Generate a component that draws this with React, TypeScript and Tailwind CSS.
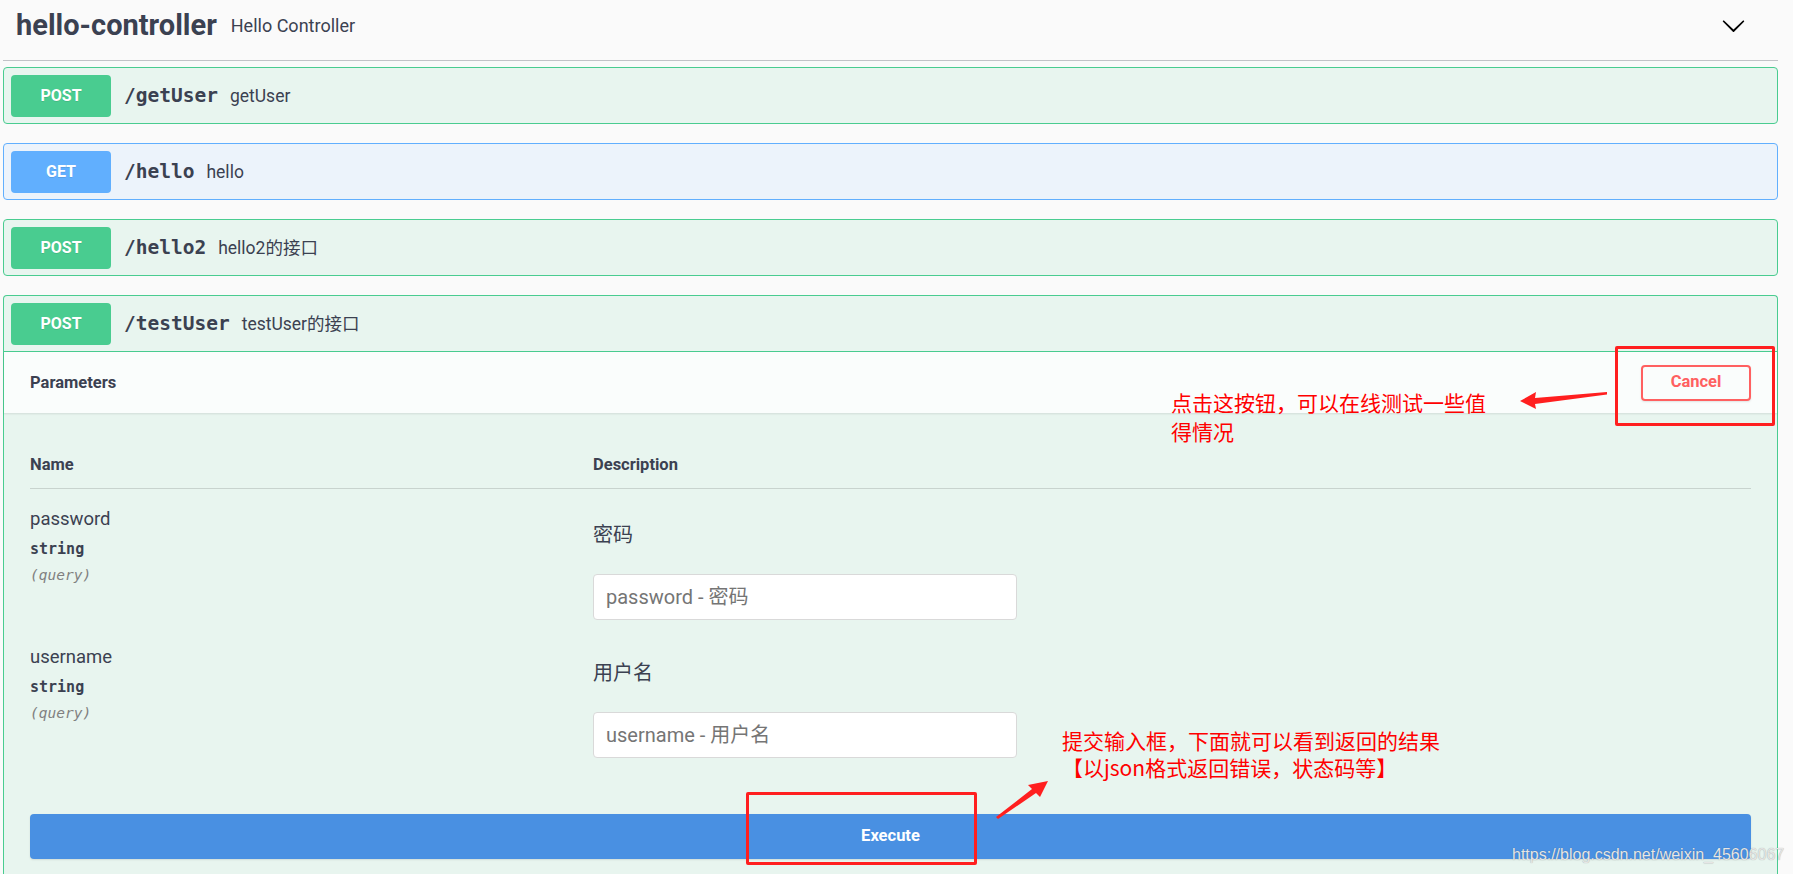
import React from 'react';

const sans = "font-['Roboto','Noto_Sans_CJK_SC',sans-serif]";

const endpoints = [
  { method: 'POST', path: '/getUser', summary: 'getUser' },
  { method: 'GET', path: '/hello', summary: 'hello' },
  { method: 'POST', path: '/hello2', summary: 'hello2的接口' },
];

const params = [
  { name: 'password', desc: '密码' },
  { name: 'username', desc: '用户名' },
];

function Summary({ method, path, summary, open }: { method: string; path: string; summary: string; open?: boolean }) {
  const get = method === 'GET';
  return (
    <div
      className={`flex items-center pl-[7px] pt-[7px] pb-[6px] ${open ? 'border-b border-[#49cc90]' : ''}`}
    >
      <span
        className={`flex h-[42px] w-[100px] items-center justify-center rounded-[4px] text-[16px] font-bold text-white [text-shadow:0_1px_0_rgba(0,0,0,0.1)] ${
          get ? 'bg-[#61affe]' : 'bg-[#49cc90]'
        }`}
      >
        {method}
      </span>
      <span className="pl-[13px] pr-[12px] font-['DejaVu_Sans_Mono',monospace] text-[19.5px] font-bold text-[#3b4151]">
        {path}
      </span>
      <span className="text-[17.5px] text-[#3b4151]">{summary}</span>
    </div>
  );
}

function ParamRow({ name, desc }: { name: string; desc: string }) {
  return (
    <div className="flex pb-[7px]">
      <div className="w-[563px] shrink-0 pt-[18px]">
        <div className="text-[18.5px] leading-[24px] text-[#3b4151]">{name}</div>
        <div className="mt-[8px] font-['DejaVu_Sans_Mono',monospace] text-[15px] font-semibold leading-[20px] text-[#3b4151]">
          string
        </div>
        <div className="mt-[6px] font-['DejaVu_Sans_Mono',monospace] text-[14.5px] italic leading-[20px] text-[#808080]">
          (query)
        </div>
      </div>
      <div className="pt-[33px]">
        <div className="text-[20px] leading-[26px] text-[#3b4151]">{desc}</div>
        <input
          readOnly
          placeholder={`${name} - ${desc}`}
          className="mt-[26px] h-[46px] w-[424px] rounded-[4px] border border-[#d9d9d9] bg-white pl-[12px] text-[20px] text-[#3b4151] outline-none placeholder:text-[#757575]"
        />
      </div>
    </div>
  );
}

export default function App() {
  return (
    <div className={`relative min-h-screen w-full overflow-hidden bg-[#fafafa] pl-[3px] pr-[15px] ${sans}`}>
      {/* tag header */}
      <div className="flex h-[61px] items-center border-b border-[#c1c3c7] pb-[10px] pl-[13px] pr-[32px]">
        <h4 className="text-[29px] font-bold leading-none text-[#3b4151]">hello-controller</h4>
        <small className="ml-[14px] text-[18px] text-[#3b4151]">Hello Controller</small>
        <svg className="ml-auto" width="25" height="25" viewBox="0 0 20 20" aria-hidden="true">
          <path
            fill="#000"
            d="M17.418 6.109c.272-.268.709-.268.979 0s.271.701 0 .969l-7.908 7.83c-.27.268-.707.268-.979 0l-7.908-7.83c-.27-.268-.27-.701 0-.969.271-.268.709-.268.979 0L10 13.25l7.418-7.141z"
          />
        </svg>
      </div>

      <div className="mt-[6px] flex flex-col gap-[19px]">
        {endpoints.map((e) => (
          <div
            key={e.path}
            className={`rounded-[4px] border ${
              e.method === 'GET' ? 'border-[#61affe] bg-[#ecf3fb]' : 'border-[#49cc90] bg-[#e8f5ef]'
            }`}
          >
            <Summary {...e} />
          </div>
        ))}

        {/* expanded operation */}
        <div className="rounded-t-[4px] border border-b-0 border-[#49cc90] bg-[#e8f5ef]">
          <Summary method="POST" path="/testUser" summary="testUser的接口" open />
          <div className="flex h-[61px] items-center justify-between bg-white/80 px-[26px] shadow-[0_1px_2px_rgba(0,0,0,0.1)]">
            <h4 className="pt-[2px] text-[16.5px] font-bold text-[#3b4151]">Parameters</h4>
            <button className="h-[36px] w-[110px] rounded-[4px] border-2 border-[#ff6060] text-[16.5px] font-bold text-[#ff6060] shadow-[0_1px_2px_rgba(0,0,0,0.1)]">
              Cancel
            </button>
          </div>
          <div className="px-[26px] pt-[42px] pb-[20px]">
            <div className="flex border-b border-[#c8d3ce] pb-[13px] text-[16.5px] font-bold leading-[20px] text-[#3b4151]">
              <div className="w-[563px]">Name</div>
              <div>Description</div>
            </div>
            {params.map((p) => (
              <ParamRow key={p.name} {...p} />
            ))}
            <button className="mt-[49px] h-[45px] w-full rounded-[4px] bg-[#4990e2] text-[16.5px] font-bold text-white shadow-[0_1px_2px_rgba(0,0,0,0.1)]">
              Execute
            </button>
          </div>
        </div>
      </div>

      {/* annotations */}
      <div className="pointer-events-none absolute left-[1615px] top-[346px] h-[80px] w-[160px] rounded-[2px] border-[3px] border-[#ff1f1f]" />
      <div className="pointer-events-none absolute left-[746px] top-[792px] h-[73px] w-[231px] rounded-[2px] border-[3px] border-[#ff1f1f]" />
      <div className="pointer-events-none absolute left-[1171px] top-[388px] whitespace-nowrap font-['Noto_Sans_CJK_SC',sans-serif] text-[21px] leading-[29px] text-[#ff0000]">
        点击这按钮，可以在线测试一些值
        <br />
        得情况
      </div>
      <div className="pointer-events-none absolute left-[1062px] top-[727px] whitespace-nowrap font-['Noto_Sans_CJK_SC',sans-serif] text-[21px] leading-[27px] text-[#ff0000]">
        提交输入框，下面就可以看到返回的结果
        <br />
        【以json格式返回错误，状态码等】
      </div>
      <svg className="pointer-events-none absolute left-0 top-0" width="1793" height="874" aria-hidden="true">
        <polygon fill="#ff1f1f" points="1520,401 1536,392 1535,398 1607,392 1607,394.5 1535,404 1536,409" />
        <polygon fill="#ff1f1f" points="1048,781 1040,797 1036,793 998,819 996,817 1032,789 1028,785" />
      </svg>
      <div className="pointer-events-none absolute left-[1512px] top-[845px] whitespace-nowrap font-['Liberation_Sans',sans-serif] text-[16px] leading-[20px] text-[#e6e6e6] [text-shadow:0_0_1px_rgba(0,0,0,0.35)]">
        https://blog.csdn.net/weixin_45606067
      </div>
    </div>
  );
}
